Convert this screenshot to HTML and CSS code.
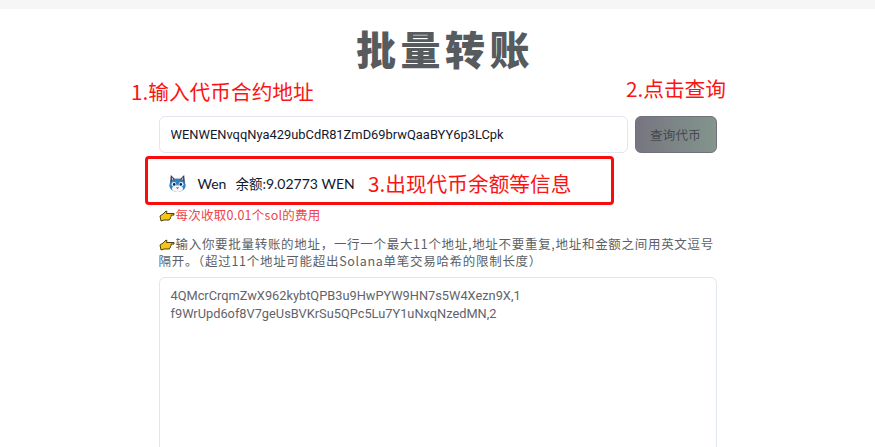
FILE: index.html
```html
<!DOCTYPE html>
<html lang="zh-CN">
<head>
    <meta charset="UTF-8">
    <meta name="viewport" content="width=device-width, initial-scale=1.0">
    <title>批量转账</title>
    <link rel="stylesheet" href="styles.css">
</head>
<body>
    <div class="top-strip"></div>
    <div class="container">
        <h1>批量转账</h1>

        <div class="search-row">
            <input class="token-input" type="text" value="WENWENvqqNya429ubCdR81ZmD69brwQaaBYY6p3LCpk">
            <button class="query-button" type="button">查询代币</button>
        </div>

        <div class="token-info">
            <svg class="token-logo" viewBox="0 0 20 20">
                <path d="M3 1l4 4h6l4-4 .8 8.5a8 8 0 0 1-15.6 0z" fill="#1d3557"/>
                <path d="M4 3l2 2.4L4 7zM16 3l-2 2.4L16 7z" fill="#e7a9b8"/>
                <ellipse cx="10" cy="12" rx="8.6" ry="7" fill="#2f7fc1"/>
                <ellipse cx="10" cy="15.4" rx="5.8" ry="3.6" fill="#f4f6fa"/>
                <circle cx="6.2" cy="10.8" r="2.5" fill="#f4f6fa"/>
                <circle cx="13.8" cy="10.8" r="2.5" fill="#f4f6fa"/>
                <circle cx="6.5" cy="11" r="1.4" fill="#10233f"/>
                <circle cx="13.5" cy="11" r="1.4" fill="#10233f"/>
                <path d="M8.4 14h3.2L10 16z" fill="#c9405a"/>
            </svg>
            <span class="token-name">Wen</span>
            <span class="token-balance"><span class="doodle">余额</span>:9.02773 WEN</span>
        </div>

        <p class="note note-fee">
            <svg class="hand" viewBox="0 0 16 12"><path d="M1 6l3-2 3-3 1 .5-.6 2H15v1.6h-3l.4 1.2-1 .9.2 1.2-1.2.8V10H5L2 11z" fill="#f5c518" stroke="#3a3000" stroke-width=".9" stroke-linejoin="round"/></svg>每次收取0.01个sol的费用
        </p>
        <p class="note note-help">
            <svg class="hand" viewBox="0 0 16 12"><path d="M1 6l3-2 3-3 1 .5-.6 2H15v1.6h-3l.4 1.2-1 .9.2 1.2-1.2.8V10H5L2 11z" fill="#f5c518" stroke="#3a3000" stroke-width=".9" stroke-linejoin="round"/></svg>输入你要批量转账的地址，一行一个最大11个地址,地址不要重复,地址和金额之间用英文逗号隔开。（超过11个地址可能超出Solana单笔交易哈希的限制长度）
        </p>

        <textarea class="address-list">4QMcrCrqmZwX962kybtQPB3u9HwPYW9HN7s5W4Xezn9X,1
f9WrUpd6of8V7geUsBVKrSu5QPc5Lu7Y1uNxqNzedMN,2</textarea>
    </div>

    <!-- red notes drawn over the page -->
    <div class="mark mark-one">1.输入代币合约地址</div>
    <div class="mark mark-two">2.点击查询</div>
    <div class="mark mark-three">3.出现代币余额等信息</div>
    <div class="mark-box"></div>
</body>
</html>
```

FILE: styles.css
```css
html {
    height: 447px;
    overflow: hidden;
}
body {
    font-family: Lato, "Noto Sans CJK SC", sans-serif;
    margin: 0;
    background-color: #fff;
    height: 447px;
    overflow: hidden;
    position: relative;
}
.top-strip {
    height: 9px;
    background-color: #f6f6f6;
}
.container {
    width: 558px;
    height: 438px;
    margin: 0 auto;
    overflow: hidden;
}
h1 {
    margin: 11px 0 0;
    height: 96px;
    padding-left: 15px;
    text-align: center;
    font-family: "Noto Sans CJK SC", sans-serif;
    font-size: 40px;
    font-weight: 900;
    line-height: 56px;
    letter-spacing: 4.5px;
    color: #575b5e;
}
.search-row {
    display: flex;
    gap: 7px;
}
.token-input {
    flex: 1;
    min-width: 0;
    height: 37px;
    box-sizing: border-box;
    padding: 0 11px;
    border: 1px solid #e2e6f0;
    border-radius: 6px;
    font-family: Roboto, sans-serif;
    font-size: 12.9px;
    color: #12182b;
}
.query-button {
    width: 82px;
    height: 37px;
    border: 1px solid #6f7278;
    border-radius: 6px;
    background: linear-gradient(90deg, #777580, #83958c);
    color: #45494e;
    font-family: "Noto Sans CJK SC", sans-serif;
    font-size: 12.5px;
    letter-spacing: .3px;
}
.token-info {
    display: flex;
    align-items: center;
    height: 46px;
    margin-top: 7px;
    padding-left: 9px;
    font-size: 14px;
    color: #12182b;
}
.token-logo {
    width: 19px;
    height: 19px;
    margin-right: 11px;
}
.token-name {
    margin-right: 9px;
}
.doodle {
    font-family: "Noto Sans CJK SC", sans-serif;
    font-size: 13.5px;
}
.note {
    margin: 0 0 6px;
    font-family: "Noto Sans CJK SC", Lato, sans-serif;
    font-size: 12.5px;
    line-height: 17px;
    color: #5c5f66;
    letter-spacing: .25px;
}
.note-fee {
    margin-top: 0;
    margin-bottom: 12px;
    color: #f0444a;
}
.note-help {
    letter-spacing: .7px;
}
.hand {
    width: 16px;
    height: 12px;
    vertical-align: -2px;
    margin-right: 1px;
}
.address-list {
    display: block;
    width: 100%;
    height: 240px;
    box-sizing: border-box;
    margin-top: 8px;
    padding: 9px 11px;
    border: 1px solid #e2e6f0;
    border-radius: 6px;
    font-family: Roboto, sans-serif;
    font-size: 12.8px;
    line-height: 18px;
    color: #5f646c;
    resize: none;
}
.mark {
    position: absolute;
    font-family: "Noto Sans CJK SC", sans-serif;
    font-size: 20.7px;
    line-height: 28px;
    color: #fb1414;
    white-space: nowrap;
}
.mark-one {
    left: 131px;
    top: 77px;
}
.mark-two {
    left: 626px;
    top: 74px;
}
.mark-three {
    left: 368px;
    top: 169px;
}
.mark-box {
    position: absolute;
    left: 145px;
    top: 156px;
    width: 463px;
    height: 43px;
    border: 3px solid #fb0c0c;
    border-radius: 4px;
}
```
